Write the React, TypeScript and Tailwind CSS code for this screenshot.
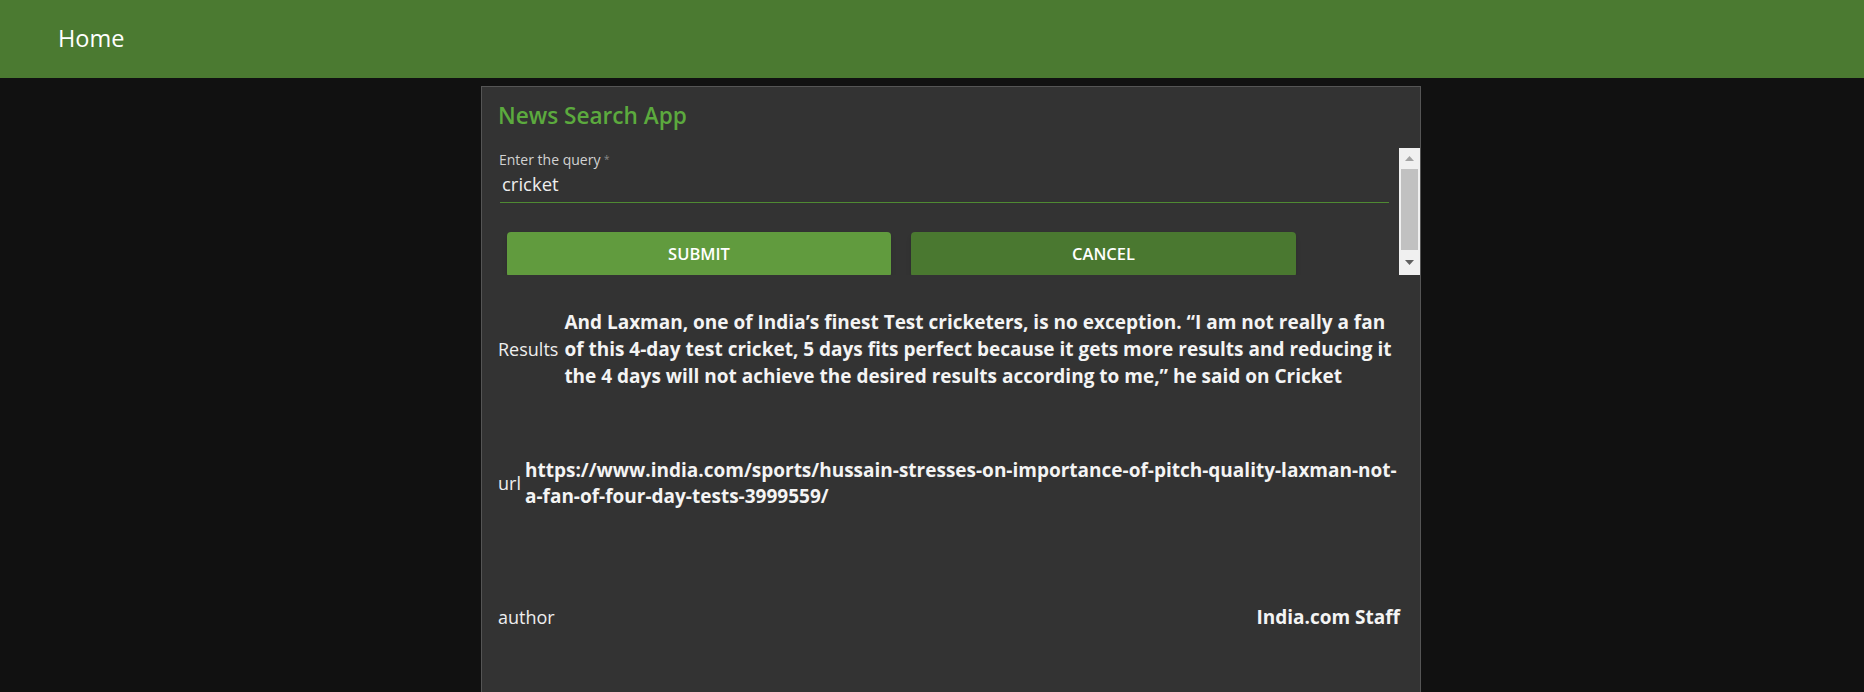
import React from "react";

const font = { fontFamily: '"Open Sans", "Noto Sans", sans-serif' };

const article = {
  description:
    "And Laxman, one of India’s finest Test cricketers, is no exception. “I am not really a fan of this 4-day test cricket, 5 days fits perfect because it gets more results and reducing it the 4 days will not achieve the desired results according to me,” he said on Cricket",
  url: "https://www.india.com/sports/hussain-stresses-on-importance-of-pitch-quality-laxman-not-a-fan-of-four-day-tests-3999559/",
  author: "India.com Staff",
};

function FakeScrollbar() {
  return (
    <div className="w-[21px] shrink-0 bg-[#f0f0f0] flex flex-col">
      <div className="h-[21px] flex items-center justify-center">
        <svg width="9" height="5" viewBox="0 0 9 5">
          <polygon points="4.5,0 9,5 0,5" fill="#a3a3a3" />
        </svg>
      </div>
      <div className="h-[81px] mx-[2px] bg-[#c1c1c1]" />
      <div className="flex-1 flex items-center justify-center">
        <svg width="9" height="5" viewBox="0 0 9 5">
          <polygon points="0,0 9,0 4.5,5" fill="#606060" />
        </svg>
      </div>
    </div>
  );
}

export default function App() {
  return (
    <div className="min-h-screen bg-[#111111] overflow-hidden" style={font}>
      <header className="h-[78px] bg-[#4b7a31] flex items-center pl-[58px]">
        <span className="text-[23.5px] text-white">Home</span>
      </header>

      <div className="pt-2 pl-[481px]">
        <div className="w-[940px] h-[640px] border border-[#555555] bg-[#333333] pl-4">
          <h2 className="mt-[14px] text-[22.6px] leading-[30px] font-semibold text-[#5caa3e]">
            News Search App
          </h2>

          {/* query form, in a short scrolling box */}
          <div className="mt-[17px] h-[127px] flex">
            <div className="flex-1 overflow-hidden pt-[2px]">
              <div className="text-[14px] leading-[19px] text-[#d2d2d2] ml-[1px]">
                Enter the query <span className="text-[#8a8a8a] text-[10px] align-top">*</span>
              </div>
              <div className="mt-[3px] ml-[2px] w-[889px] pb-[5px] border-b border-[#4f8a33]">
                <input
                  defaultValue="cricket"
                  className="w-full h-[24px] leading-[24px] bg-transparent text-[18.5px] text-[#eeeeee] outline-none pl-[2px]"
                  style={font}
                />
              </div>
              <div className="mt-[29px] ml-[9px] flex gap-5 pb-[8px]">
                <button className="w-[384px] h-[45px] rounded bg-[#619b3e] text-white text-[16.5px] font-semibold shadow-md">
                  SUBMIT
                </button>
                <button className="w-[385px] h-[45px] rounded bg-[#4a7830] text-white text-[16.5px] font-semibold shadow-md">
                  CANCEL
                </button>
              </div>
            </div>
            <FakeScrollbar />
          </div>

          <div className="mt-[7px] pr-5">
            <div className="h-[134px] flex items-center">
              <span className="text-[18px] text-[#eeeeee]">Results</span>
              <p className="ml-[6px] flex-1 text-[19px] leading-[27px] font-bold text-[#f4f4f4]">
                {article.description}
              </p>
            </div>
            <div className="h-[134px] flex items-center">
              <span className="text-[18px] text-[#eeeeee]">url</span>
              <p className="ml-[4px] flex-1 text-[19px] leading-[26px] font-bold text-[#f4f4f4] break-words">
                {article.url}
              </p>
            </div>
            <div className="h-[134px] flex items-center justify-between">
              <span className="text-[18px] text-[#eeeeee]">author</span>
              <span className="text-[19px] font-bold text-[#f4f4f4]">{article.author}</span>
            </div>
          </div>
        </div>
      </div>
    </div>
  );
}
